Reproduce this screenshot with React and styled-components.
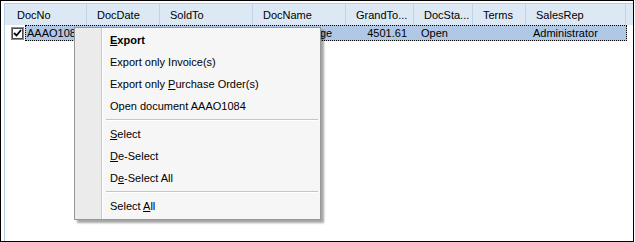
import React from "react";
import styled, { createGlobalStyle } from "styled-components";

const GlobalStyle = createGlobalStyle`
    body {
        margin: 0;
        background: #ffffff;
        font-family: "Liberation Sans", Arial, sans-serif;
        font-size: 11px;
        color: #000000;
    }
`;

const columns = [
    { key: "docNo", title: "DocNo", width: 82, pad: 12 },
    { key: "docDate", title: "DocDate", width: 73 },
    { key: "soldTo", title: "SoldTo", width: 93 },
    { key: "docName", title: "DocName", width: 93 },
    { key: "grandTotal", title: "GrandTo...", width: 68, align: "right" },
    { key: "docStatus", title: "DocSta...", width: 59 },
    { key: "terms", title: "Terms", width: 53 },
    { key: "salesRep", title: "SalesRep", width: 100 },
];

const row = {
    docNo: "AAAO1084",
    docDate: "12/03/2012",
    soldTo: "Customer",
    docName: "Tool Exchange",
    grandTotal: "4501.61",
    docStatus: "Open",
    terms: "",
    salesRep: "Administrator",
};

const menuItems = [
    { label: "Export", mnemonic: 0, bold: true },
    { label: "Export only Invoice(s)" },
    { label: "Export only Purchase Order(s)", mnemonic: 12 },
    { label: "Open document AAAO1084" },
    { separator: true },
    { label: "Select", mnemonic: 0 },
    { label: "De-Select", mnemonic: 0 },
    { label: "De-Select All", mnemonic: 1 },
    { separator: true },
    { label: "Select All", mnemonic: 7 },
];

const Frame = styled.div`
    position: relative;
    width: 634px;
    height: 242px;
    box-sizing: border-box;
    border: 1px solid #000000;
    padding: 2px 0 0 3px;
    background: #ffffff;
`;

const Grid = styled.div`
    height: 100%;
    box-sizing: border-box;
    border-left: 1px solid #b8cce4;
    border-top: 1px solid #b8cce4;
`;

const HeaderRow = styled.div`
    display: flex;
    height: 21px;
    background: #dde8f5;
`;

const HeaderCell = styled.div`
    flex: 0 0 ${(p) => p.$width}px;
    box-sizing: border-box;
    display: flex;
    align-items: center;
    padding-left: ${(p) => p.$pad || 10}px;
    border-right: 1px solid #c3d4ea;
    white-space: nowrap;
    overflow: hidden;
`;

const DataRow = styled.div`
    display: flex;
    height: 16px;
`;

const CheckCell = styled.div`
    flex: 0 0 20px;
    display: flex;
    align-items: center;
    padding-left: 7px;
    box-sizing: border-box;
`;

const CheckBox = styled.div`
    width: 11px;
    height: 11px;
    box-sizing: border-box;
    border: 1px solid #4d4d4d;
    outline: 1px solid #8a8a8a;
    background: #ffffff;
    display: flex;
    align-items: center;
    justify-content: center;
`;

const Selection = styled.div`
    display: flex;
    flex: 0 0 600px;
    box-sizing: border-box;
    background: #b0c8e6;
    border: 1px dotted #000000;
`;

const Cell = styled.div`
    flex: 0 0 ${(p) => p.$width}px;
    box-sizing: border-box;
    display: flex;
    align-items: center;
    justify-content: ${(p) => (p.$align === "right" ? "flex-end" : "flex-start")};
    padding: 0 7px 0 ${(p) => p.$pad}px;
    white-space: nowrap;
    overflow: hidden;
`;

const Menu = styled.div`
    position: absolute;
    left: 73px;
    top: 26px;
    width: 247px;
    box-sizing: border-box;
    border: 1px solid #979797;
    padding: 1px 2px 2px;
    box-shadow: 3px 3px 2px rgba(0, 0, 0, 0.35);
    display: flex;
    flex-direction: column;
    background: linear-gradient(
        to right,
        #ebebeb 0px,
        #ebebeb 26px,
        #c8c8c8 26px,
        #c8c8c8 27px,
        #ffffff 27px,
        #ffffff 28px,
        #f6f6f6 28px
    );
`;

const MenuItem = styled.div`
    height: 22px;
    display: flex;
    align-items: center;
    padding-left: 33px;
    font-weight: ${(p) => (p.$bold ? "bold" : "normal")};
    white-space: pre;
`;

const Separator = styled.div`
    height: 1px;
    margin: 2px 0 2px 29px;
    background: #c5c5c5;
    border-bottom: 1px solid #ffffff;
`;

const Mnemonic = styled.span`
    text-decoration: underline;
`;

const Label = ({ text, mnemonic }) => {
    if (mnemonic === undefined) return <span>{text}</span>;
    return (
        <span>
            {text.slice(0, mnemonic)}
            <Mnemonic>{text[mnemonic]}</Mnemonic>
            {text.slice(mnemonic + 1)}
        </span>
    );
};

const App = () => {
    return (
        <>
            <GlobalStyle />
            <Frame>
                <Grid>
                    <HeaderRow>
                        {columns.map((c) => (
                            <HeaderCell key={c.key} $width={c.width} $pad={c.pad}>
                                {c.title}
                            </HeaderCell>
                        ))}
                    </HeaderRow>
                    <DataRow>
                        <CheckCell>
                            <CheckBox>
                                <svg width="9" height="9" viewBox="0 0 9 9">
                                    <path
                                        d="M1 4 L3.5 6.5 L8 1"
                                        stroke="#000"
                                        strokeWidth="1.8"
                                        fill="none"
                                    />
                                </svg>
                            </CheckBox>
                        </CheckCell>
                        <Selection>
                            {columns.map((c, i) => (
                                <Cell
                                    key={c.key}
                                    $width={i === 0 ? 61 : c.width}
                                    $pad={i === 0 ? 1 : 7}
                                    $align={c.align}
                                >
                                    {row[c.key]}
                                </Cell>
                            ))}
                        </Selection>
                    </DataRow>
                </Grid>
                <Menu>
                    {menuItems.map((m, i) =>
                        m.separator ? (
                            <Separator key={i} />
                        ) : (
                            <MenuItem key={i} $bold={m.bold}>
                                <Label text={m.label} mnemonic={m.mnemonic} />
                            </MenuItem>
                        )
                    )}
                </Menu>
            </Frame>
        </>
    );
};

export default App;
